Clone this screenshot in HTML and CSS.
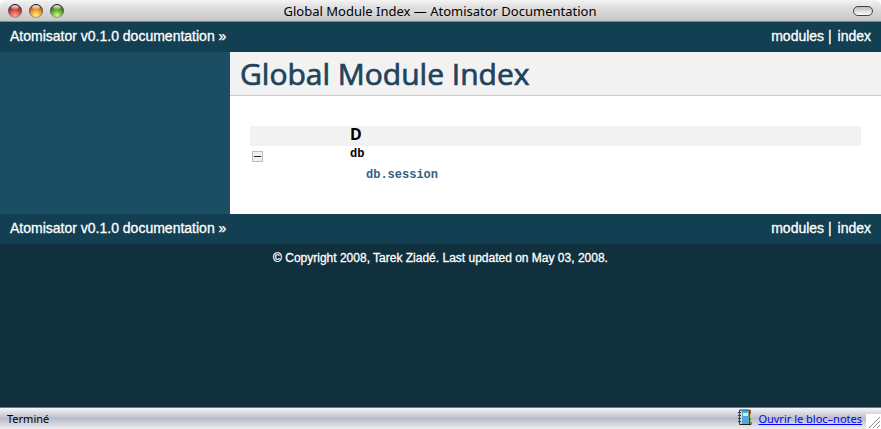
FILE: index.html
```html
<!DOCTYPE html>
<html lang="en">
<head>
<meta charset="utf-8">
<title>Global Module Index — Atomisator Documentation</title>
<link rel="stylesheet" href="styles.css">
</head>
<body>
<header class="titlebar">
  <svg class="lights" width="58" height="16" viewBox="0 0 58 16" aria-hidden="true">
    <defs>
      <radialGradient id="red" cx=".5" cy=".85" r=".8"><stop offset="0" stop-color="#ffa9a0"/><stop offset=".5" stop-color="#d9504b"/><stop offset="1" stop-color="#7d1518"/></radialGradient>
      <radialGradient id="amber" cx=".5" cy=".85" r=".8"><stop offset="0" stop-color="#fff58a"/><stop offset=".5" stop-color="#f3a02e"/><stop offset="1" stop-color="#9a4606"/></radialGradient>
      <radialGradient id="green" cx=".5" cy=".85" r=".8"><stop offset="0" stop-color="#d2ff8c"/><stop offset=".5" stop-color="#67b532"/><stop offset="1" stop-color="#1d5b0c"/></radialGradient>
      <linearGradient id="shine" x2="0" y2="1"><stop offset="0" stop-color="#fff" stop-opacity=".95"/><stop offset="1" stop-color="#fff" stop-opacity=".15"/></linearGradient>
      <linearGradient id="rim" x2="0" y2="1"><stop offset="0" stop-color="#222"/><stop offset="1" stop-color="#999"/></linearGradient>
    </defs>
    <g stroke="url(#rim)">
      <circle cx="8" cy="8" r="6.5" fill="url(#red)"/>
      <circle cx="29" cy="8" r="6.5" fill="url(#amber)"/>
      <circle cx="50" cy="8" r="6.5" fill="url(#green)"/>
    </g>
    <g fill="url(#shine)">
      <ellipse cx="8" cy="4.400" rx="3.800" ry="2.100"/>
      <ellipse cx="29" cy="4.400" rx="3.800" ry="2.100"/>
      <ellipse cx="50" cy="4.400" rx="3.800" ry="2.100"/>
    </g>
  </svg>
  <span class="window-title">Global Module Index — Atomisator Documentation</span>
  <button class="pill" type="button" aria-label="Toggle toolbar"></button>
</header>

<nav class="related">
  <a href="#">Atomisator v0.1.0 documentation »</a>
  <span><a href="#">modules</a> | <a class="last" href="#">index</a></span>
</nav>

<div class="document">
  <main class="body">
    <h1>Global Module Index</h1>
    <table class="modules">
      <tr class="letter"><td class="toggle"></td><th>D</th></tr>
      <tr>
        <td class="toggle"><button class="collapse" type="button" aria-label="Collapse db"><svg width="11" height="11" viewBox="0 0 11 11"><path d="M2 5.5h7" stroke="#222"/></svg></button></td>
        <td><code>db</code></td>
      </tr>
      <tr><td class="toggle"></td><td class="child"><a href="#"><code>db.session</code></a></td></tr>
    </table>
  </main>
</div>

<nav class="related">
  <a href="#">Atomisator v0.1.0 documentation »</a>
  <span><a href="#">modules</a> | <a class="last" href="#">index</a></span>
</nav>

<footer class="copyright">© Copyright 2008, Tarek Ziadé. Last updated on May 03, 2008.</footer>

<div class="status">
  <span class="state">Terminé</span>
  <svg class="notebook" width="15" height="17" viewBox="0 0 15 17" aria-hidden="true">
    <path d="M12 2h2v13h-2z" fill="#e8d34a"/>
    <path d="M12 1h2v4h-2z" fill="#c94a35"/>
    <path d="M12 9h2v3h-2z" fill="#66a950"/>
    <path d="M2.5 1h10v14.500h-10z" fill="#5aa6d6" stroke="#22506f"/>
    <path d="M3 15.5h11V13" fill="none" stroke="#222"/>
    <path d="M3 2h2v13H3z" fill="#c5dbe9"/>
    <path d="M6 4h5v3H6z" fill="#d9eefa"/>
    <path d="M1 3.500h3M1 6.500h3M1 9.500h3M1 12.500h3" stroke="#333"/>
  </svg>
  <a class="notes" href="#">Ouvrir le bloc–notes</a>
  <svg class="grip" width="15" height="15" viewBox="0 0 15 15" aria-hidden="true"><path d="M0 0h15v15H0z" fill="#fff"/><path d="M3 14L14 3M7 14l7-7M11 14l3-3" stroke="#888"/></svg>
</div>
</body>
</html>
```
FILE: styles.css
```css
* { box-sizing: border-box; }

html { background: #fff; }

body {
  margin: 0;
  min-height: 100vh;
  display: flex;
  flex-direction: column;
  color: #000;
  font-family: "Liberation Sans", Arial, sans-serif;
}

.titlebar {
  height: 22px;
  display: grid;
  grid-template-columns: 1fr auto 1fr;
  align-items: center;
  padding: 0 8px 0 7px;
  background: linear-gradient(#f4f4f4, #e2e2e2 30%, #c6c6c6);
  border-bottom: 1px solid #858585;
  border-radius: 6px 6px 0 0;
}

.lights { display: block; }

.window-title {
  font: 13px/20px "Noto Sans", sans-serif;
}

.pill {
  justify-self: end;
  width: 20px;
  height: 10px;
  padding: 0;
  border: 1px solid #444;
  border-radius: 5px;
  background: linear-gradient(#bbb, #fff);
}

.related {
  display: flex;
  justify-content: space-between;
  padding: 0 10px 2px;
  background: #133f52;
  color: #fff;
  font-size: 14px;
  line-height: 28px;
  -webkit-text-stroke: 0.3px #fff;
}

.related a { color: #fff; text-decoration: none; }
.related .last { margin-left: 2px; }

.document { background: #1c4e63; }

.body {
  margin-left: 230px;
  padding: 0 20px 28px;
  background: #fff;
}

h1 {
  margin: 0 -20px 30px;
  padding: 0 10px;
  background: #f2f2f2;
  border-bottom: 1px solid #ccc;
  color: #20435c;
  font: 30px/43px "Open Sans", sans-serif;
  -webkit-text-stroke: 0.7px #20435c;
}

.modules {
  width: 100%;
  border-collapse: collapse;
}

.modules td, .modules th {
  height: 20px;
  padding: 0;
  text-align: left;
  vertical-align: top;
  line-height: 16px;
}

.modules .letter { background: #f2f2f2; }
.modules th { font-family: "Noto Sans", sans-serif; font-size: 16px; }
.modules .toggle { width: 100px; padding: 5px 0 0 2px; }
.modules th { padding-left: 0; }
.modules .child { padding-left: 16px; }
.modules a { color: #355f7c; text-decoration: none; }

.modules code {
  display: block;
  font: bold 12px/16px "Liberation Mono", monospace;
}

.modules .child code { line-height: 18px; }

.collapse {
  display: block;
  width: 11px;
  height: 11px;
  padding: 0;
  border: 0;
  outline: 1px solid #bbb;
  outline-offset: -1px;
  background: #f0f0f0;
}

.collapse svg { display: block; }

.copyright {
  flex: 1;
  padding: 5px 10px;
  background: #11303d;
  color: #fff;
  font-size: 12px;
  line-height: 18px;
  text-align: center;
  -webkit-text-stroke: 0.3px #fff;
}

.status {
  height: 22px;
  display: flex;
  align-items: center;
  padding-left: 7px;
  border-top: 1px solid #777;
  background: linear-gradient(#f6f6f8, #b9bbc8 50%, #eeeef2);
  font: 11px/20px "Noto Sans", sans-serif;
}

.notebook { margin: 0 6px 2px auto; }
.notes { color: #00f; }
.grip { align-self: flex-end; margin-left: 4px; }
```
